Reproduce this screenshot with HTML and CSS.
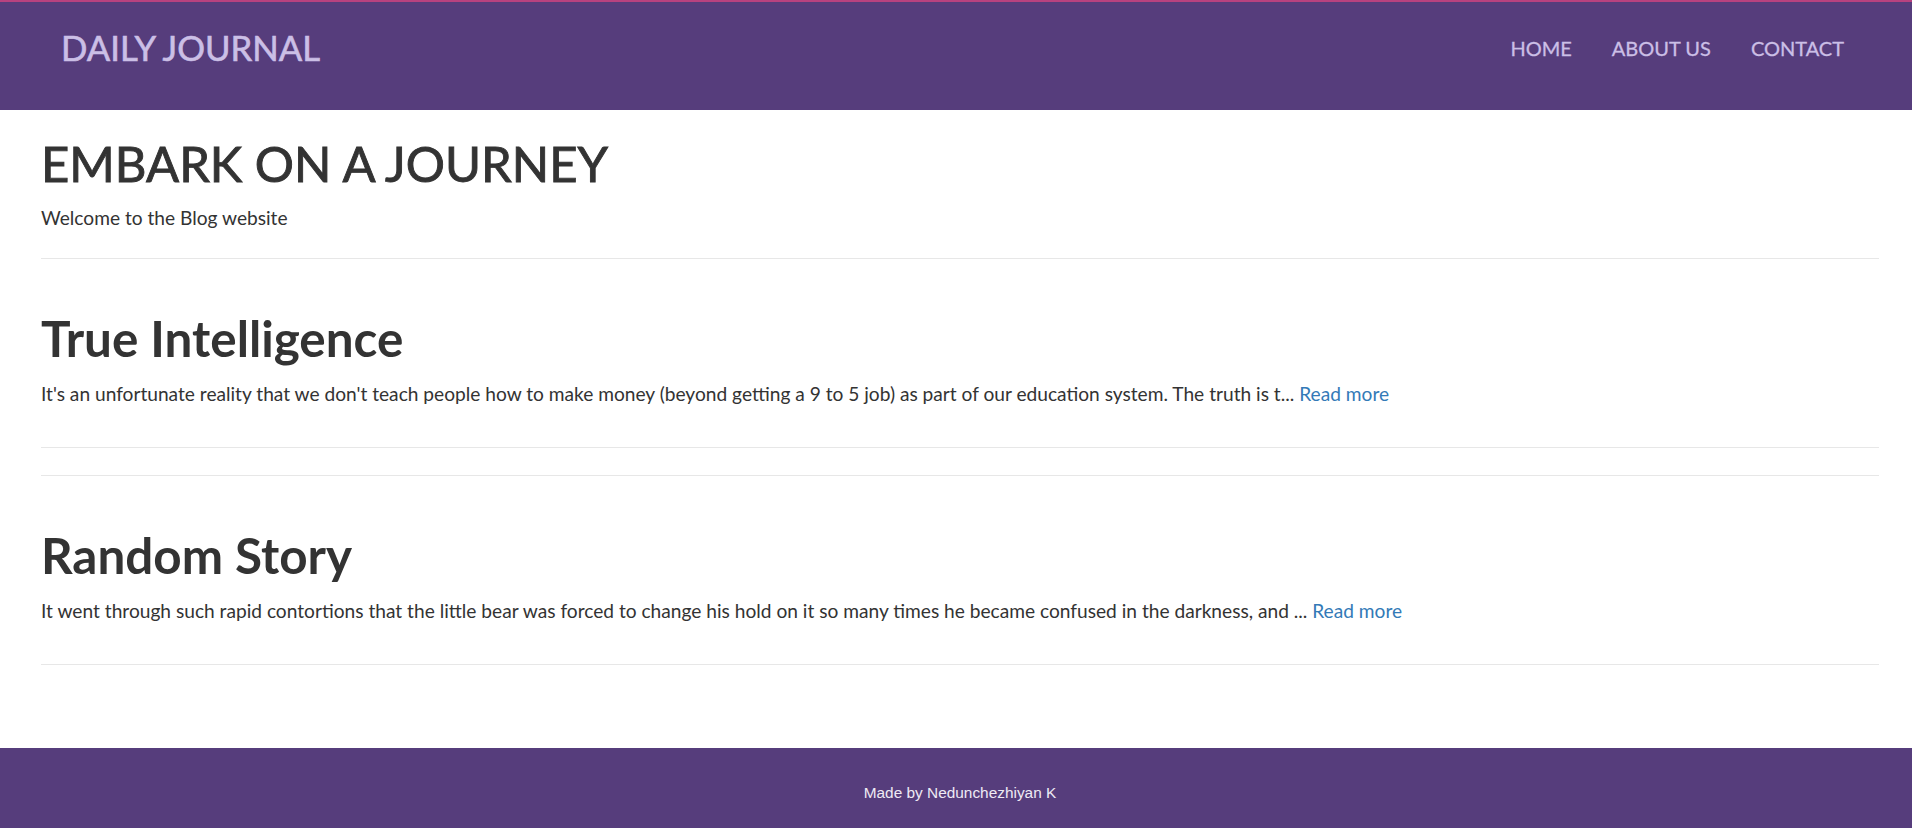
FILE: index.html
```html
<!DOCTYPE html>
<html lang="en">
<head>
<meta charset="utf-8">
<title>Daily Journal</title>
<link rel="stylesheet" href="styles.css">
</head>
<body>
<header class="navbar">
  <div class="navbar-row">
    <a class="brand" href="#">DAILY JOURNAL</a>
    <nav class="nav">
      <a href="#">HOME</a>
      <a href="#">ABOUT US</a>
      <a href="#">CONTACT</a>
    </nav>
  </div>
</header>
<main class="content">
  <section class="intro">
    <h1 class="page-title">EMBARK ON A JOURNEY</h1>
    <p class="text">Welcome to the Blog website</p>
    <hr class="rule">
  </section>
  <article class="post">
    <h2 class="post-title">True Intelligence</h2>
    <p class="text">It's an unfortunate reality that we don't teach people how to make money (beyond getting a 9 to 5 job) as part of our education system. The truth is t... <a class="more" href="#">Read more</a></p>
    <hr class="rule">
  </article>
  <hr class="rule sep">
  <article class="post">
    <h2 class="post-title">Random Story</h2>
    <p class="text">It went through such rapid contortions that the little bear was forced to change his hold on it so many times he became confused in the darkness, and ... <a class="more" href="#">Read more</a></p>
    <hr class="rule">
  </article>
</main>
<footer class="footer">
  <p class="footer-text">Made by Nedunchezhiyan K</p>
</footer>
</body>
</html>
```
FILE: styles.css
```css
html, body {
  margin: 0;
  padding: 0;
}
body {
  font-family: Lato, "Open Sans", sans-serif;
  color: #333;
  background: #fff;
  min-height: 100vh;
  display: flex;
  flex-direction: column;
}
a {
  text-decoration: none;
}
.navbar {
  box-sizing: border-box;
  height: 110px;
  border-top: 2px solid #b8427f;
  background: #563d7c;
  padding: 25px 68px 0 61px;
}
.navbar-row {
  display: flex;
  align-items: center;
  justify-content: space-between;
  height: 42px;
}
.brand {
  font-size: 34.7px;
  line-height: 42px;
  color: #cbbfe6;
  -webkit-text-stroke: 0.6px #cbbfe6;
}
.nav {
  display: flex;
  gap: 40px;
}
.nav a {
  font-size: 20px;
  line-height: 24px;
  color: #cbbfe6;
  -webkit-text-stroke: 0.3px #cbbfe6;
}
.content {
  padding: 0 33px 0 41px;
}
.page-title {
  margin: 27px 0 15px;
  font-size: 49px;
  line-height: 52.8px;
  font-weight: 400;
  -webkit-text-stroke: 0.9px #333;
}
.text {
  margin: 0;
  font-size: 19.15px;
  line-height: 26px;
}
.rule {
  margin: 27px 0 0;
  border: 0;
  border-top: 1px solid #e7e7e7;
  height: 0;
}
.post-title {
  margin: 52px 0 16px;
  font-size: 49.4px;
  line-height: 1.1;
  font-weight: 700;
}
.post .rule {
  margin-top: 40px;
}
.sep {
  margin-top: 27px;
}
.more {
  color: #337ab7;
}
.footer {
  margin-top: auto;
  height: 80px;
  box-sizing: border-box;
  background: #563d7c;
  padding: 36px 0 0 8px;
  text-align: center;
}
.footer-text {
  margin: 0;
  font-family: "Liberation Sans", Arial, sans-serif;
  font-size: 15.4px;
  color: #eeeaf4;
}
```
